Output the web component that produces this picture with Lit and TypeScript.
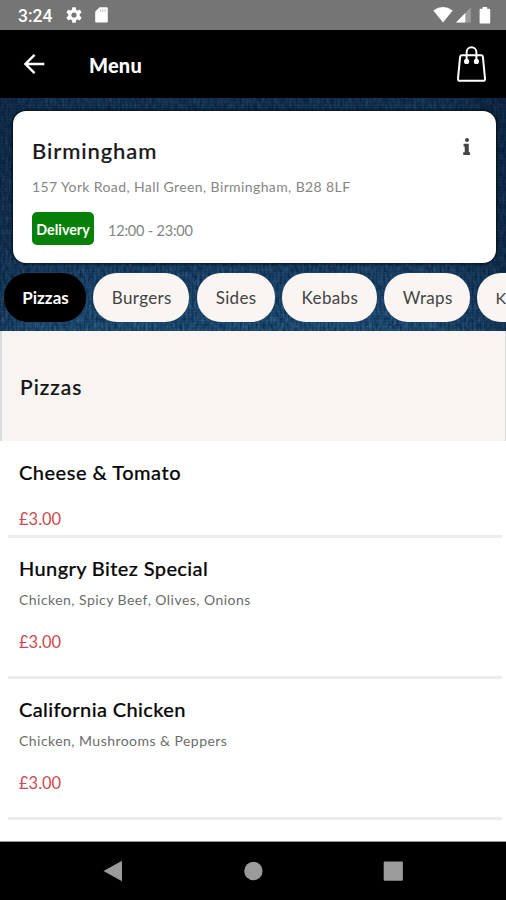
import { LitElement, html, css, svg, nothing } from "lit";
import { customElement, property } from "lit/decorators.js";
import { classMap } from "lit/directives/class-map.js";

interface Dish {
  name: string;
  description?: string;
  price: string;
}

const CATEGORIES = ["Pizzas", "Burgers", "Sides", "Kebabs", "Wraps", "K"];

const DISHES: Dish[] = [
  { name: "Cheese & Tomato", price: "£3.00" },
  { name: "Hungry Bitez Special", description: "Chicken, Spicy Beef, Olives, Onions", price: "£3.00" },
  { name: "California Chicken", description: "Chicken, Mushrooms & Peppers", price: "£3.00" },
];

const COG_TEETH = [0, 60, 120, 180, 240, 300];

@customElement("status-bar")
class StatusBar extends LitElement {
  static styles = css`
    :host { display: flex; align-items: center; height: 30px; background: #757575; color: #fff; padding: 0 15px 0 18px; box-sizing: border-box; }
    .time { font: 500 17.5px/30px Roboto, sans-serif; width: 48px; padding-top: 1px; }
    .grow { flex: 1; }
    svg { display: block; }
    .cog { margin-right: 13px; }
    .wifi { margin-right: 3px; }
    .cell { margin-right: 8px; }
  `;
  render() {
    return html`
      <span class="time">3:24</span>
      <svg class="cog" width="16" height="16" viewBox="0 0 16 16">
        ${COG_TEETH.map((a) => svg`<rect x="6.1" y="0.2" width="3.8" height="4" rx=".6" fill="#fff" transform="rotate(${a} 8 8)" />`)}
        <circle cx="8" cy="8" r="4.2" fill="none" stroke="#fff" stroke-width="3.2" />
      </svg>
      <svg width="13" height="16" viewBox="0 0 13 16">
        <path d="M4.6 0.3H11.6Q12.8 .3 12.8 1.5V14.2Q12.8 15.5 11.6 15.5H1.4Q.2 15.5 .2 14.2V4.8Z" fill="#fff" />
        <path d="M5.3 2.4v2.4M7.7 2.4v2.4M10.1 2.4v2.4" stroke="#b5b5b5" stroke-width="1" />
      </svg>
      <span class="grow"></span>
      <svg class="wifi" width="20" height="16" viewBox="0 0 20 16">
        <path d="M.3 3.4Q10-3.2 19.7 3.4L10 15.4Z" fill="#fff" />
      </svg>
      <svg class="cell" width="15" height="16" viewBox="0 0 15 16">
        <path d="M14.8 .3V15.5H0Z" fill="#9b9b9b" />
        <path d="M9.3 6V15.5H0Z" fill="#fff" />
      </svg>
      <svg width="12" height="17" viewBox="0 0 12 17">
        <path d="M3.6 0H8.1V1.7H10Q11.2 1.7 11.2 3V15.4Q11.2 16.6 10 16.6H1.8Q.6 16.6 .6 15.4V3Q.6 1.7 1.8 1.7H3.6Z" fill="#fff" />
      </svg>
    `;
  }
}

@customElement("app-header")
class AppHeader extends LitElement {
  static styles = css`
    :host { display: flex; align-items: center; height: 68px; background: #000; color: #fff; padding: 0 19px 0 23px; box-sizing: border-box; }
    h1 { flex: 1; margin: 0 0 0 44px; font: 900 20px/30px Lato, sans-serif; letter-spacing: .2px; padding-top: 2px; }
    svg { display: block; }
  `;
  render() {
    return html`
      <svg width="22" height="20" viewBox="0 0 22 20" fill="none" stroke="#fff" stroke-width="2.4">
        <path d="M21.3 10H2.4M11.6 .9 2.4 10l9.2 9.1" />
      </svg>
      <h1>Menu</h1>
      <svg width="31" height="38" viewBox="0 0 31 38" fill="none" stroke="#fff" stroke-width="2" stroke-linecap="round" stroke-linejoin="round">
        <path d="M6 10.2H25.1Q26.7 10.2 26.9 11.8L29 33.6Q29.2 35.8 27 35.8H4Q1.8 35.8 2 33.6L4.1 11.8Q4.3 10.2 6 10.2Z" />
        <path d="M10.6 16V7.2a4.9 4.9 0 0 1 9.8 0V16" />
        <circle cx="10.6" cy="16.4" r="1.9" fill="#fff" stroke-width="1.4" />
        <circle cx="20.4" cy="16.4" r="1.9" fill="#fff" stroke-width="1.4" />
      </svg>
    `;
  }
}

@customElement("store-card")
class StoreCard extends LitElement {
  static styles = css`
    :host { display: block; position: relative; box-sizing: border-box; height: 152px; margin: 0 10.5px 0 12.5px; padding: 25px 24px 0 19.5px; background: #fff; border-radius: 13px; box-shadow: 0 0 3px 1px #000b; font-family: Lato, sans-serif; }
    .top { display: flex; justify-content: space-between; height: 30px; }
    h2 { margin: 0; font: 500 22px/30px Lato, sans-serif; color: #181818; letter-spacing: .9px; -webkit-text-stroke: .2px #181818; }
    .address { margin-top: 11px; font-size: 14px; line-height: 20px; color: #858585; letter-spacing: .39px; white-space: nowrap; }
    .service { display: flex; align-items: center; margin-top: 15px; height: 33px; }
    .badge { width: 62px; height: 33px; border-radius: 5px; background: #078007; color: #fff; text-align: center; font: 700 14.3px/35px Lato, sans-serif; }
    .hours { margin-left: 14px; padding-top: 4px; font-size: 14.5px; letter-spacing: -.2px; color: #858585; }
    svg { display: block; margin-top: 2px; }
  `;
  render() {
    return html`
      <div class="top">
        <h2>Birmingham</h2>
        <svg width="11" height="18" viewBox="0 0 11 18" fill="#444">
          <circle cx="6" cy="2.1" r="2" />
          <path d="M2.6 5.8H7.8V14.2H9V17H2.2V14.2H3.7V8.6H2.6Z" />
        </svg>
      </div>
      <div class="address">157 York Road, Hall Green, Birmingham, B28 8LF</div>
      <div class="service">
        <span class="badge">Delivery</span>
        <span class="hours">12:00 - 23:00</span>
      </div>
    `;
  }
}

@customElement("category-tabs")
class CategoryTabs extends LitElement {
  static styles = css`
    :host { display: grid; position: relative; grid-template-columns: 82px 96px 78px 95px 86px 82px; grid-template-rows: 49px; column-gap: 7.3px; margin: 10px 0 0 4px; width: 560px; }
    .pill { box-sizing: border-box; height: 49px; border-radius: 24px; background: #f9f5f2; color: #444; font: 400 17px/50px Lato, sans-serif; text-align: center; letter-spacing: .35px; padding-left: 1px; }
    .active { background: #000; color: #fff; font-weight: 700; letter-spacing: 0; }
    .pill:last-child { text-align: left; padding-left: 18px; font-size: 16px; }
  `;
  render() {
    return CATEGORIES.map((name, i) => html`<span class=${classMap({ pill: true, active: i === 0 })}>${name}</span>`);
  }
}

@customElement("dish-row")
class DishRow extends LitElement {
  @property({ attribute: false }) dish!: Dish;
  static styles = css`
    :host { display: block; margin: 0 4.5px 0 7.5px; padding: 14px 0 22px 11.5px; border-bottom: 3px solid #ececec; font-family: Lato, sans-serif; }
    :host(.compact) { padding: 15px 0 4px 11.5px; }
    h3 { margin: 0; padding-top: 0.5px; font: 500 20px/30px Lato, sans-serif; color: #080808; letter-spacing: .38px; -webkit-text-stroke: .2px #080808; }
    :host(.compact) h3 { letter-spacing: .5px; }
    .description { margin-top: 7.5px; font-size: 14px; line-height: 20px; color: #6c6c6c; letter-spacing: .46px; }
    .price { margin-top: 20px; font-size: 16.5px; line-height: 24px; color: #cc4a51; }
    :host(.compact) .price { margin-top: 20.5px; }
  `;
  render() {
    const { name, description, price } = this.dish;
    return html`
      <h3>${name}</h3>
      ${description ? html`<div class="description">${description}</div>` : nothing}
      <div class="price">${price}</div>
    `;
  }
}

@customElement("nav-bar")
class NavBar extends LitElement {
  static styles = css`
    :host { display: grid; grid-template-columns: 140px 140px 140px; justify-content: center; align-items: center; justify-items: center; height: 59px; background: #000; border-top: 1px solid #999; box-sizing: border-box; }
    svg { display: block; }
  `;
  render() {
    return html`
      <svg width="20" height="22" viewBox="0 0 20 22"><path d="M.5 11 19 .8V21.2Z" fill="#9b9b9b" /></svg>
      <svg width="20" height="20" viewBox="0 0 20 20"><circle cx="10.4" cy="10" r="9.2" fill="#9b9b9b" /></svg>
      <svg width="20" height="20" viewBox="0 0 20 20"><rect x=".7" y=".5" width="19.2" height="19.2" rx="1" fill="#9b9b9b" /></svg>
    `;
  }
}

@customElement("app-root")
class AppRoot extends LitElement {
  static styles = css`
    :host { display: flex; flex-direction: column; width: 506px; height: 900px; background: #fff; overflow: hidden; }
    .hero { position: relative; height: 233px; box-sizing: border-box; padding-top: 13px; overflow: hidden; background: #153f68; }
    .denim { position: absolute; inset: 0; display: block; }
    .section { box-sizing: border-box; height: 110px; background: #f8f4f1; border-left: 2px solid #dcdcdc; border-right: 1px solid #dcdcdc; padding: 41px 0 0 18px; }
    .section h2 { margin: 0; font: 500 21px/30px Lato, sans-serif; color: #141414; letter-spacing: 1px; -webkit-text-stroke: .2px #141414; }
    .dishes { flex: 1; min-height: 0; }
  `;
  render() {
    return html`
      <status-bar></status-bar>
      <app-header></app-header>
      <div class="hero">
        <svg class="denim" width="506" height="233" viewBox="0 0 506 233">
          <defs>
            <filter id="weave" x="0" y="0" width="100%" height="100%" color-interpolation-filters="sRGB">
              <feTurbulence type="fractalNoise" baseFrequency=".35 .16" numOctaves="3" seed="7" />
              <feColorMatrix values=".22 0 0 0 0  .3 0 0 0 .13  .32 0 0 0 .27  0 0 0 0 1" />
            </filter>
            <pattern id="threads" width="4" height="3" patternUnits="userSpaceOnUse">
              <rect width="1.3" height="3" fill="#06203c" opacity=".28" />
              <rect width="4" height="1" fill="#4f86a8" opacity=".1" />
            </pattern>
            <linearGradient id="shade" x2="0" y2="1">
              <stop offset="0" stop-color="#020c20" stop-opacity=".4" />
              <stop offset=".65" stop-color="#020c20" stop-opacity=".25" />
              <stop offset="1" stop-color="#020c20" stop-opacity="0" />
            </linearGradient>
            <linearGradient id="edges">
              <stop offset="0" stop-color="#020c20" stop-opacity=".2" />
              <stop offset=".1" stop-color="#020c20" stop-opacity="0" />
              <stop offset=".85" stop-color="#020c20" stop-opacity="0" />
              <stop offset="1" stop-color="#020c20" stop-opacity=".3" />
            </linearGradient>
          </defs>
          <rect width="506" height="233" filter="url(#weave)" />
          <rect width="506" height="233" fill="url(#threads)" />
          <rect width="506" height="233" fill="url(#shade)" />
          <rect width="506" height="233" fill="url(#edges)" />
        </svg>
        <store-card></store-card>
        <category-tabs></category-tabs>
      </div>
      <div class="section"><h2>Pizzas</h2></div>
      <div class="dishes">
        ${DISHES.map((d) => html`<dish-row class=${classMap({ compact: !d.description })} .dish=${d}></dish-row>`)}
      </div>
      <nav-bar></nav-bar>
    `;
  }
}
